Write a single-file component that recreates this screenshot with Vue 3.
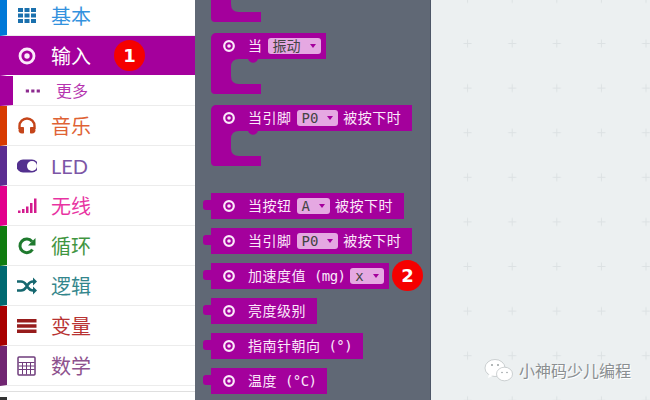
<template>
  <div class="page">
    <aside class="sidebar">
      <div
        v-for="cat in categories"
        :key="cat.name"
        class="cat"
        :class="{ active: cat.active, sub: cat.sub }"
        :style="{ '--c': cat.color }"
      >
        <svg class="cat-icon" viewBox="0 0 20 20" v-html="cat.icon"></svg>
        <span class="cat-name">{{ cat.name }}</span>
        <span v-if="cat.active" class="badge">1</span>
      </div>
      <div class="side-end"></div>
      <div class="side-foot"></div>
    </aside>

    <section class="flyout">
      <svg class="hat-body first" width="50" height="22" viewBox="0 0 50 22">
        <path d="M0 0H20V4Q20 12 28 12H50V22H4Q0 22 0 18Z" />
      </svg>

      <div v-for="(hat, i) in hats" :key="i" class="hat">
        <div class="block head">
          <svg class="ring" viewBox="0 0 12 12"><circle cx="6" cy="6" r="4.8" /><circle class="dot" cx="6" cy="6" r="1.8" /></svg>
          <template v-for="(p, j) in hat" :key="j">
            <span v-if="p.pill" class="pill">{{ p.pill }}<i class="caret"></i></span>
            <span v-else>{{ p.t }}</span>
          </template>
        </div>
        <svg class="hat-body" width="50" height="35" viewBox="0 0 50 35">
          <path d="M0 0H47C45 5 39 5 37 0H28Q20 0 20 8V17Q20 25 28 25H50V35H4Q0 35 0 31Z" />
        </svg>
      </div>

      <div class="list">
        <div v-for="(row, i) in blocks" :key="i" class="block tabbed">
          <svg class="ring" viewBox="0 0 12 12"><circle cx="6" cy="6" r="4.8" /><circle class="dot" cx="6" cy="6" r="1.8" /></svg>
          <template v-for="(p, j) in row" :key="j">
            <span v-if="p.pill" class="pill">{{ p.pill }}<i class="caret"></i></span>
            <span v-else-if="p.m" class="unit">{{ p.m }}</span>
            <span v-else>{{ p.t }}</span>
          </template>
        </div>
      </div>
      <span class="badge two">2</span>
    </section>

    <main class="workspace">
      <svg class="grid" width="219" height="400">
        <defs>
          <pattern id="cross" x="14.3" y="21.2" width="44.6" height="44.6" patternUnits="userSpaceOnUse">
            <path d="M18.3 22.3h8M22.3 18.3v8" stroke="#dce1e3" fill="none" />
          </pattern>
        </defs>
        <rect width="219" height="400" fill="url(#cross)" />
      </svg>
      <div class="mark">
        <svg width="30" height="25" viewBox="0 0 30 25">
          <ellipse cx="11" cy="10" rx="10" ry="8.5" fill="#fff" stroke="#b9bec0" stroke-width=".7" />
          <path d="M5 16l-1 4 5-2z" fill="#fff" />
          <ellipse cx="20.500" cy="16" rx="8" ry="6.800" fill="#fff" stroke="#b9bec0" stroke-width=".7" />
          <circle cx="8" cy="7" r="1" fill="#9aa0a2" />
          <circle cx="14" cy="7" r="1" fill="#9aa0a2" />
          <circle cx="18" cy="14.500" r=".8" fill="#9aa0a2" />
          <circle cx="23" cy="14.500" r=".8" fill="#9aa0a2" />
        </svg>
        <span>小神码少儿编程</span>
      </div>
    </main>
  </div>
</template>

<script setup>
const categories = [
  {
    name: '基本',
    color: '#0078d7',
    icon: '<path fill="#1a70ad" d="M1 2h5v4H1zM7.500 2h5v4h-5zM14 2h5v4h-5zM1 7.500h5v4H1zM7.500 7.500h5v4h-5zM14 7.500h5v4h-5zM1 13h5v4H1zM7.500 13h5v4h-5zM14 13h5v4h-5z"/>'
  },
  {
    name: '输入',
    color: '#a4009c',
    active: true,
    icon: '<circle cx="10" cy="10" r="7" fill="none" stroke="#fbeafa" stroke-width="2.800"/><circle cx="10" cy="10" r="2.700" fill="#fbeafa"/>'
  },
  {
    name: '更多',
    color: '#a4009c',
    sub: true,
    icon: '<path fill="#8d2b8f" d="M1 8h4v4H1zM7.800 8h4v4h-4zM14.600 8h4v4h-4z"/>'
  },
  {
    name: '音乐',
    color: '#d83b01',
    icon: '<path d="M2.500 13V10a7.500 7.500 0 0 1 15 0v3" fill="none" stroke="#c5451a" stroke-width="2.400"/><path fill="#c5451a" d="M3 11h3.200q.8 0 .8.800v5q0 .8-.8.800H5q-3.500-.5-3.500-3.300 0-2 1.500-3.300zM17 11h-3.200q-.8 0-.8.800v5q0 .8.800.800H15q3.500-.5 3.500-3.300 0-2-1.500-3.300z"/>'
  },
  {
    name: 'LED',
    color: '#5c2d91',
    icon: '<rect x="-.5" y="3.500" width="22" height="13" rx="6.500" fill="#53308f"/><circle cx="15" cy="10" r="5" fill="#fff"/>'
  },
  {
    name: '无线',
    color: '#e3008c',
    icon: '<path fill="#d31b8e" d="M1 14.500h2.500V17H1zM5 13h2.500v4H5zM9 10.500h2.500V17H9zM13 7h2.500v10H13zM17 2.500h2.500V17H17z"/>'
  },
  {
    name: '循环',
    color: '#107c10',
    icon: '<path d="M15.500 13.500A6.800 6.800 0 1 1 15 5.500" fill="none" stroke="#1f7a2e" stroke-width="3"/><path fill="#1f7a2e" d="M18.500 2v7.500H11z"/>'
  },
  {
    name: '逻辑',
    color: '#006970',
    icon: '<path d="M0 5.500h4q3 0 5 3l2 3q2 3 5 3h1M0 14.500h4q3 0 5-3l2-3q2-3 5-3h1" fill="none" stroke="#15676f" stroke-width="2.600"/><path fill="#15676f" d="M16 1.500l4 4-4 4zM16 10.500l4 4-4 4z"/>'
  },
  {
    name: '变量',
    color: '#a80000',
    icon: '<path fill="#971c1c" d="M0 3h19.500v3.500H0zM0 8.200h19.500v3.500H0zM0 13.400h19.500v3.500H0z"/>'
  },
  {
    name: '数学',
    color: '#712672',
    icon: '<rect x="1" y="1" width="17" height="18" rx="1" fill="none" stroke="#6f3c7c" stroke-width="1.500"/><path d="M1.500 6.500h16M1.500 10h16M1.500 13.500h16M5.500 6.500v12M9.500 6.500v12M13.500 6.500v12" stroke="#6f3c7c" fill="none"/>'
  }
]

const hats = [
  [{ t: '当' }, { pill: '振动' }],
  [{ t: '当引脚' }, { pill: 'P0' }, { t: '被按下时' }]
]

const blocks = [
  [{ t: '当按钮' }, { pill: 'A' }, { t: '被按下时' }],
  [{ t: '当引脚' }, { pill: 'P0' }, { t: '被按下时' }],
  [{ t: '加速度值' }, { m: '(mg)' }, { pill: 'x' }],
  [{ t: '亮度级别' }],
  [{ t: '指南针朝向' }, { m: '(°)' }],
  [{ t: '温度' }, { m: '(°C)' }]
]
</script>

<style scoped>
.page {
  display: flex;
  width: 650px;
  height: 400px;
  overflow: hidden;
  position: relative;
  font-family: "Noto Sans CJK SC", sans-serif;
}

.sidebar {
  width: 195px;
  flex: none;
  margin-top: -4px;
  background: #fff;
}

.cat {
  display: flex;
  align-items: center;
  height: 40px;
  box-sizing: border-box;
  padding-left: 17px;
  border-left: 7px solid var(--c);
  border-bottom: 1px solid #ececec;
  color: var(--c);
  font: 20px/1 "Lato", "Noto Sans CJK SC", sans-serif;
}

.cat-icon {
  width: 20px;
  height: 20px;
  flex: none;
  margin-left: -7px;
  margin-right: 14px;
}

.cat-name {
  opacity: .8;
}

.active {
  background: var(--c);
  color: #fff;
  border-bottom-color: #fff;
}

.active .cat-name {
  opacity: 1;
}

.sub {
  height: 30px;
  padding-left: 12px;
  border-left-width: 13px;
  font-size: 16px;
}

.sub .cat-icon {
  width: 16px;
  height: 16px;
  margin-left: 0;
  margin-right: 15px;
}

.side-end {
  height: 5px;
  border-bottom: 1px solid #dfdfdf;
}

.side-foot {
  width: 7px;
  height: 4px;
  margin-top: 5px;
  background: #333;
}

.flyout {
  width: 236px;
  flex: none;
  box-sizing: border-box;
  padding-left: 16px;
  background: #606875;
  border-right: 1px solid #4d5667;
}

.hat-body {
  display: block;
  fill: #a4009c;
}

.hat-body.first {
  margin-bottom: 11px;
}

.hat {
  margin-bottom: 11px;
}

.block {
  display: flex;
  align-items: center;
  gap: 5px;
  width: fit-content;
  height: 26px;
  box-sizing: border-box;
  padding: 0 11px 0 12px;
  background: #a4009c;
  color: #fbe9fa;
  font: 14px/1 "DejaVu Sans Mono", "Noto Sans CJK SC", monospace;
  letter-spacing: .5px;
  white-space: pre;
}

.head {
  border-radius: 5px 0 0 0;
}

.ring {
  width: 12px;
  height: 12px;
  flex: none;
  margin-right: 8px;
  fill: none;
  stroke: #fbe9fa;
  stroke-width: 2.200;
}

.ring .dot {
  fill: #fbe9fa;
  stroke: none;
}

.unit {
  margin-left: 3px;
  letter-spacing: -.6px;
}

.pill {
  display: flex;
  align-items: center;
  height: 16px;
  padding: 0 5px;
  border-radius: 3px;
  background: #e5a8e2;
  color: #444;
  letter-spacing: 0;
}

.pill:last-child {
  margin-right: -6px;
}

.caret {
  margin-left: 9px;
  border: 3px solid transparent;
  border-top: 4px solid #a4009c;
  border-bottom: 0;
}

.list {
  display: flex;
  flex-direction: column;
  gap: 9px;
  margin-top: 27px;
}

.tabbed {
  position: relative;
}

.tabbed::before {
  content: "";
  position: absolute;
  left: -8px;
  top: 7px;
  width: 8px;
  height: 10px;
  border-radius: 3px 0 0 3px;
  background: #a4009c;
}

.badge {
  display: flex;
  align-items: center;
  justify-content: center;
  width: 31px;
  height: 31px;
  flex: none;
  margin-left: 23px;
  border-radius: 50%;
  background: #f50000;
  color: #fff;
  font: bold 18px/1 "DejaVu Sans", sans-serif;
}

.badge.two {
  position: absolute;
  left: 392px;
  top: 260px;
  margin: 0;
}

.workspace {
  flex: 1;
  position: relative;
  background: #ecf0f1;
}

.grid {
  position: absolute;
  left: 0;
  top: 0;
}

.mark {
  position: absolute;
  left: 53px;
  top: 358px;
  display: flex;
  align-items: center;
  gap: 5px;
  color: #8b8f91;
  font-size: 16px;
  line-height: 25px;
  text-shadow: 1px 1px 0 #fff;
}
</style>
